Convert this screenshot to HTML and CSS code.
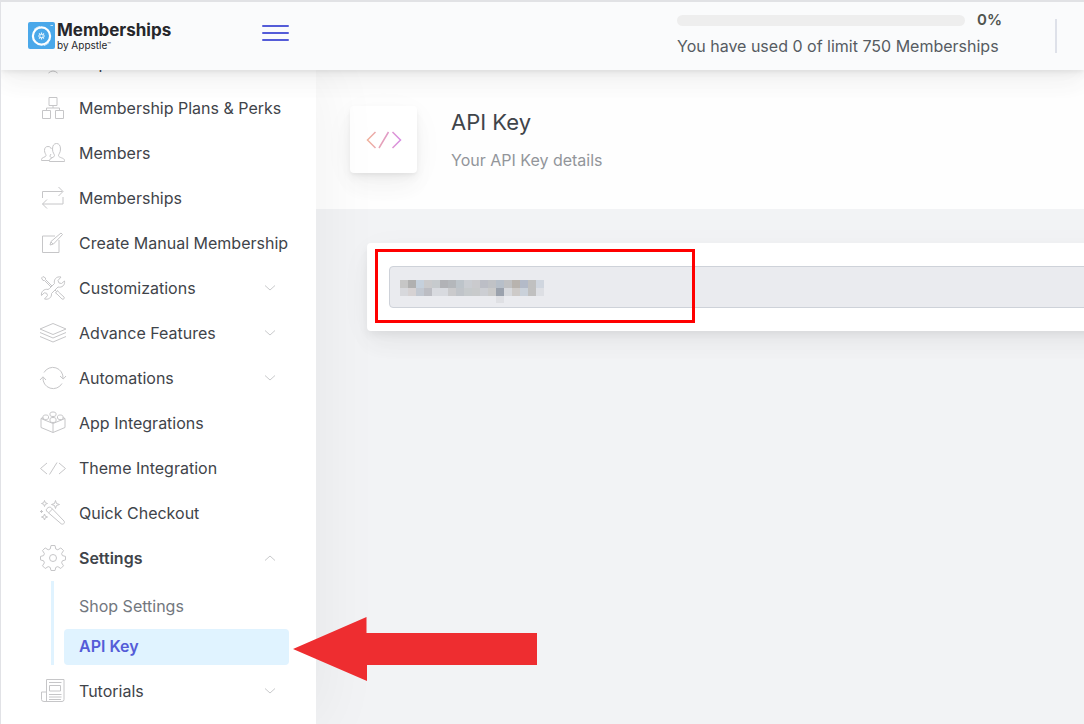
FILE: index.html
```html
<!DOCTYPE html>
<html lang="en">
<head>
<meta charset="utf-8">
<meta name="viewport" content="width=device-width, initial-scale=1">
<title>API Key</title>
<link rel="stylesheet" href="styles.css">
</head>
<body>
<header class="topbar">
  <a class="brand" href="#" aria-label="Memberships by Appstle">
    <svg class="brand-mark" viewBox="0 0 27 27" aria-hidden="true">
      <rect width="27" height="27" rx="2" fill="#4aa8ea"/>
      <circle cx="13.5" cy="14" r="8.6" fill="none" stroke="#fff" stroke-width="2.2"/>
      <path d="M6 7.500a10 10 0 0 1 6-3M21 20.500a10 10 0 0 1-5 3" fill="none" stroke="#d4ecfb" stroke-width="1"/>
      <path d="M13.500 10.500v7M10 14h7M11 11.500l5 5M16 11.500l-5 5" stroke="#e8f5fd" stroke-width="1.200"/>
      <circle cx="13.500" cy="14" r="1.200" fill="#4aa8ea"/>
      <path d="M22.500 3.500h2.500" stroke="#c5e4f9"/>
    </svg>
    <span class="brand-text"><strong>Memberships</strong><span>by Appstle<small>™</small></span></span>
  </a>
  <button class="burger" type="button" aria-label="Toggle menu"><i></i><i></i><i></i></button>
  <div class="usage">
    <div class="usage-row"><span class="track"></span><b>0%</b></div>
    <p>You have used 0 of limit 750 Memberships</p>
  </div>
  <span class="divider"></span>
</header>
<div class="shell">
  <nav class="sidebar" aria-label="Main menu">
    <ul class="menu">
      <li><a href="#"><svg class="ico" viewBox="0 0 26 26"><path d="M3 3h20v14H3zM13 17v3M8.500 23q4.500-4 9 0"/></svg><span>Reports</span></a></li>
      <li><a href="#"><svg class="ico" viewBox="0 0 26 26"><path d="M9 2.500h8v8H9zM2.500 15.500h8v8h-8zM15.500 15.500h8v8h-8zM13 10.500v2.500M6.500 15.500V13h13v2.500"/></svg><span>Membership Plans &amp; Perks</span></a></li>
      <li><a href="#"><svg class="ico" viewBox="0 0 26 26"><path d="M9.500 21.500v-1c0-3 5-2.500 5-5 0-1.500-2-2.500-2-6.500 0-3.500 1.500-5.500 4-5.500s4 2 4 5.500c0 4-2 5-2 6.500 0 2.500 6 2 6 5v1zM9.500 20.500H1.500v-1c0-2.500 4.500-2 4.500-4C6 14 4.500 13 4.500 10.500 4.500 8 5.500 6.500 8 6.500c1.800 0 3 .8 3.300 2.500M11 14c-.5 1-1 1.500-1 2 0 1 1 1.500 2 2"/></svg><span>Members</span></a></li>
      <li><a href="#"><svg class="ico" viewBox="0 0 26 26"><path d="M2.500 13V6.500h20M18.500 2l4.500 4.500-4.500 4.500M23 12v7H2.500M7 14.500L2.500 19 7 23.500"/></svg><span>Memberships</span></a></li>
      <li><a href="#"><svg class="ico" viewBox="0 0 26 26"><path d="M19 10v12.500H2.500V6H15M10 15l1-3.500L21 3l1.500 1.500-9 9.500zM11 12l2 2"/></svg><span>Create Manual Membership</span></a></li>
      <li><a href="#"><svg class="ico" viewBox="0 0 26 26"><path d="M9.500 13.500l5-5C13.500 5 16 1 21 2l-3 3.500 1 2.500 2.500.5L24.500 6c.8 4-2.500 7-6.500 6l-6.500 6.500c.5 4-3 6.500-7 5.500l3-3.500-.8-2.200-2.400-.5L1.500 20.500c-.8-4 3-7 6.500-6zM12 11L5.500 4.500 5.500 3 3 1.500 1.500 3 3 5.500h1.500L11 12M15.500 18l1.500 1 5 5c1.500 1 3-1 2-2l-5.500-5-1-1.500zM15 15l1.500 1.500"/></svg><span>Customizations</span><svg class="chev" viewBox="0 0 12 8"><path d="M1 1.500l5 4.500 5-4.500"/></svg></a></li>
      <li><a href="#"><svg class="ico" viewBox="0 0 26 26"><path d="M0 9L13 3.500 26 9 13 14.500zM0 12.500L13 18l13-5.500M0 16.500L13 22l13-5.500"/></svg><span>Advance Features</span><svg class="chev" viewBox="0 0 12 8"><path d="M1 1.500l5 4.500 5-4.500"/></svg></a></li>
      <li><a href="#"><svg class="ico" viewBox="0 0 26 26"><path d="M4 7.500a10.200 10.200 0 0 1 19 6M22 18.500a10.200 10.200 0 0 1-19-6M20 11l3.200 3L26 11M0 15l3-3.200L6 15"/></svg><span>Automations</span><svg class="chev" viewBox="0 0 12 8"><path d="M1 1.500l5 4.500 5-4.500"/></svg></a></li>
      <li><a href="#"><svg class="ico" viewBox="0 0 26 26"><path d="M1 8.500l12 5 12-5v9l-12 5-12-5zM13 13.500v9M1 8.500l2-1M25 8.500l-2-1M3 9V6.500c0-2 5.500-2 5.500 0V8c0 2-5.500 2-5.500 0M17.500 8V6.500c0-2 5.500-2 5.500 0V9c-1 1-5.500 1-5.500-1M10 5V3.500c0-2 6-2 6 0V5c0 2-6 2-6 0M10 11V9c0-2 6-2 6 0v2c0 2-6 2-6 0"/></svg><span>App Integrations</span></a></li>
      <li><a href="#"><svg class="ico" viewBox="0 0 26 26"><path d="M7 8l-6.500 5.500L7 19M19 8l6.500 5.500L19 19M17 7.500L9.500 19.500"/></svg><span>Theme Integration</span></a></li>
      <li><a href="#"><svg class="ico" viewBox="0 0 26 26"><path d="M7 8.500c1.500-1.500 3-2 4.500-.5L24 21c1.500 2-1 4-2.800 2.800L7.500 12C6 10.500 6 9.500 7 8.500zM8.500 13l4-4M4.500 .5l.8 2.200 2.200.8-2.200.8-.8 2.200-.8-2.200-2.200-.8 2.200-.8zM15.500.5l1 3 3 1-3 1-1 3-1-3-3-1 3-1zM4.500 14l.8 2.200 2.200.8-2.200.8-.8 2.200-.8-2.200-2.200-.8 2.200-.8zM1.500 10v3M0 11.500h3"/></svg><span>Quick Checkout</span></a></li>
      <li><a class="open" href="#"><svg class="ico" viewBox="0 0 26 26"><circle cx="13" cy="13" r="3.500"/><path d="M11 .5h4l.8 3.500 2 .8 3-1.900 2.700 2.700-1.900 3 .8 2 3.100.8v3.500l-3.100.9-.8 2 1.900 3-2.700 2.700-3-1.900-2 .8-.8 3.100h-4l-.8-3.100-2-.8-3 1.900-2.700-2.700 1.900-3-.8-2-3.100-.9v-3.500l3.100-.8.8-2-1.900-3 2.700-2.700 3 1.900 2-.8z" stroke-linejoin="round"/></svg><span>Settings</span><svg class="chev" viewBox="0 0 12 8"><path d="M1 6.500L6 2l5 4.500"/></svg></a>
        <ul class="submenu">
          <li><a href="#">Shop Settings</a></li>
          <li><a class="current" href="#" aria-current="page">API Key</a>
            <svg class="arrow" viewBox="0 0 244 64" aria-hidden="true"><path d="M0 32L73.500 0v16H244v32H74v16z"/></svg></li>
        </ul>
      </li>
      <li><a href="#"><svg class="ico" viewBox="0 0 26 26"><path d="M6.500 23.500V1.500H24v20q0 2-2 2H4q-2.500 0-2.500-2V14h5M9 4.500h12.500M9.500 7.500h11v5.500h-11zM9 16.500h12.500M9 19h12.500M9 21.500h12"/></svg><span>Tutorials</span><svg class="chev" viewBox="0 0 12 8"><path d="M1 1.500l5 4.500 5-4.500"/></svg></a></li>
    </ul>
  </nav>
  <main class="main">
    <section class="title-bar">
      <div class="title-icon">
        <svg viewBox="0 0 36 18" aria-hidden="true">
          <defs><linearGradient id="warm" x1="0" y1="0" x2="36" y2="0" gradientUnits="userSpaceOnUse"><stop offset="0" stop-color="#f1b398"/><stop offset="1" stop-color="#d68be6"/></linearGradient></defs>
          <path d="M9.500 1L1.500 9l8 8M26.500 1l8 8-8 8M22.500 1L13 17" fill="none" stroke="url(#warm)" stroke-width="1.500"/>
        </svg>
      </div>
      <div class="title-text"><h1>API Key</h1><p>Your API Key details</p></div>
    </section>
    <section class="card">
      <div class="field">
        <input type="text" aria-label="API key" readonly>
        <svg class="mosaic" viewBox="0 0 144 23" shape-rendering="crispEdges" aria-hidden="true">
          <g><rect width="8" height="8" fill="#c6c6c6"/><rect x="8" width="8" height="8" fill="#b0b0b0"/><rect x="16" width="8" height="8" fill="#c5d0dc"/><rect x="24" width="8" height="8" fill="#cacacc"/><rect x="32" width="8" height="8" fill="#c6cacd"/><rect x="40" width="8" height="8" fill="#b1b2b6"/><rect x="48" width="8" height="8" fill="#b4b7bb"/><rect x="56" width="8" height="8" fill="#bdc4ca"/><rect x="64" width="8" height="8" fill="#cacdd2"/><rect x="72" width="8" height="8" fill="#cacacd"/><rect x="80" width="8" height="8" fill="#bcbec6"/><rect x="88" width="8" height="8" fill="#c0c2c6"/><rect x="96" width="8" height="8" fill="#b7bfc9"/><rect x="104" width="8" height="8" fill="#c0c1c3"/><rect x="112" width="8" height="8" fill="#b8b3ae"/><rect x="120" width="8" height="8" fill="#b3bac8"/><rect x="128" width="8" height="8" fill="#c0c0c0"/><rect x="136" width="8" height="8" fill="#d0d6df"/></g>
          <g><rect y="8" width="8" height="8" fill="#d7d8dc"/><rect x="8" y="8" width="8" height="8" fill="#d6d2d3"/><rect x="16" y="8" width="8" height="8" fill="#c2c8d1"/><rect x="24" y="8" width="8" height="8" fill="#bcbdc3"/><rect x="32" y="8" width="16" height="8" fill="#d8dadf"/><rect x="48" y="8" width="8" height="8" fill="#cacacc"/><rect x="56" y="8" width="8" height="8" fill="#c0c4c9"/><rect x="64" y="8" width="8" height="8" fill="#c6cacc"/><rect x="72" y="8" width="8" height="8" fill="#c8cacb"/><rect x="80" y="8" width="8" height="8" fill="#ccced3"/><rect x="88" y="8" width="8" height="8" fill="#cacaca"/><rect x="96" y="8" width="8" height="8" fill="#9ba2ad"/><rect x="104" y="8" width="8" height="8" fill="#d7d9dd"/><rect x="112" y="8" width="8" height="8" fill="#cdcac8"/><rect x="120" y="8" width="8" height="8" fill="#cad1da"/><rect x="128" y="8" width="8" height="8" fill="#c0c0c0"/><rect x="136" y="8" width="8" height="8" fill="#dddfe4"/><rect x="96" y="16" width="8" height="7" fill="#dfe0e4"/></g>
        </svg>
      </div>
      <span class="highlight"></span>
    </section>
  </main>
</div>
</body>
</html>
```
FILE: styles.css
```css
* { box-sizing: border-box; }
:root {
  --lift: 0 7px 35px rgba(4, 9, 20, .03), 0 15px 22px rgba(4, 9, 20, .03), 0 4px 8px rgba(4, 9, 20, .05), 0 2px 3px rgba(4, 9, 20, .03);
}
body {
  margin: 0;
  height: 100vh;
  display: flex;
  flex-direction: column;
  overflow: hidden;
  background: #f2f3f5;
  border-left: 1px solid #e1e2e6;
  color: #3f444a;
  font: 16px/24px Inter, "Open Sans", sans-serif;
}
a { color: inherit; text-decoration: none; }
ul { list-style: none; margin: 0; padding: 0; }
h1, p { margin: 0; font-weight: 400; }

.topbar {
  position: relative;
  z-index: 3;
  flex: none;
  display: flex;
  align-items: center;
  height: 70px;
  padding: 0 27px;
  background: #fafbfc;
  border-top: 2px solid #e1e2e5;
  box-shadow: var(--lift);
}
.brand { display: flex; align-items: center; gap: 2px; width: 234px; margin-bottom: 2px; }
.brand-mark { width: 27px; height: 27px; }
.brand-text { display: flex; flex-direction: column; padding-top: 2px; color: #26272b; font-size: 10px; line-height: 12px; }
.brand-text strong { font-size: 17px; line-height: 17px; }
.brand-text small { font-size: 6px; line-height: 6px; vertical-align: 2px; }
.burger {
  display: flex;
  flex-direction: column;
  justify-content: space-between;
  width: 27px;
  height: 16px;
  margin-bottom: 7px;
  padding: 0;
  border: 0;
  background: none;
}
.burger i { height: 2px; border-radius: 1px; background: #545cd8; }
.usage { margin-left: auto; width: 325px; margin-bottom: 4px; color: #565b62; white-space: nowrap; }
.usage-row { display: flex; align-items: center; gap: 12px; }
.usage-row b { font-weight: 600; font-size: 15px; color: #50544f; }
.usage p { line-height: 28px; }
.track { width: 289px; height: 11px; border-radius: 6px; background: #eee; }
.divider { width: 2px; height: 34px; margin-left: 53px; background: #dee1e9; }

.shell { flex: 1; display: flex; min-height: 0; }
.sidebar {
  position: relative;
  z-index: 2;
  flex: none;
  width: 315px;
  background: #fff;
  box-shadow: 7px 0 60px rgba(0, 0, 0, .05);
}
/* The list is scrolled part of the way under the top bar. */
.menu { margin-top: -29px; }
.menu > li > a { display: flex; align-items: center; height: 45px; padding: 0 40px 2px 39px; white-space: nowrap; }
.menu > li > a span { margin-left: 13px; }
.menu > li > a.open { font-weight: 600; }
.ico { flex: none; width: 26px; height: 26px; fill: none; stroke: #c6c6c8; stroke-width: 1; overflow: visible; }
.chev { flex: none; width: 12px; height: 8px; margin-left: auto; fill: none; stroke: #c9cacc; }
.submenu {
  display: flex;
  flex-direction: column;
  gap: 4px;
  margin: 0 27px 4px 50px;
  padding: 8px 0 0 10px;
  border-left: 3px solid #e0f3ff;
}
.submenu li { position: relative; }
.submenu a { display: block; padding: 0 15px 2px; border-radius: 4px; line-height: 34px; color: #72777e; }
.submenu a.current { background: #e0f3ff; color: #545cd8; font-weight: 600; }
.arrow { position: absolute; left: calc(100% + 4px); top: -12px; width: 244px; height: 64px; fill: #ee2d30; }

.main { flex: 1; min-width: 0; overflow: hidden; }
.title-bar { display: flex; align-items: center; gap: 34px; padding: 34px; height: 139px; background: #fefefe; }
.title-icon {
  display: flex;
  align-items: center;
  justify-content: center;
  width: 67px;
  height: 67px;
  border-radius: 4px;
  background: #fff;
  box-shadow: var(--lift);
}
.title-icon svg { width: 36px; height: 18px; }
.title-text { padding-top: 4px; }
.title-bar h1 { font-size: 22px; line-height: 36px; }
.title-bar p { line-height: 40px; color: #92959a; }
.card {
  position: relative;
  margin: 34px -50px 0 51px;
  padding: 23px 22px;
  border-radius: 4px;
  background: #fff;
  box-shadow: 0 7px 35px rgba(4, 9, 20, .03), 0 15px 22px rgba(4, 9, 20, .03), 0 4px 8px rgba(4, 9, 20, .05);
}
.field { position: relative; display: flex; }
.field input { flex: 1; height: 42px; padding: 0 12px; border: 1px solid #ced2d9; border-radius: 4px; background: #eaebef; font: inherit; }
.mosaic { position: absolute; left: 11px; top: 14px; width: 144px; height: 23px; }
.highlight { position: absolute; left: 8px; top: 6px; width: 320px; height: 74px; border: 3px solid #f00; }
```
